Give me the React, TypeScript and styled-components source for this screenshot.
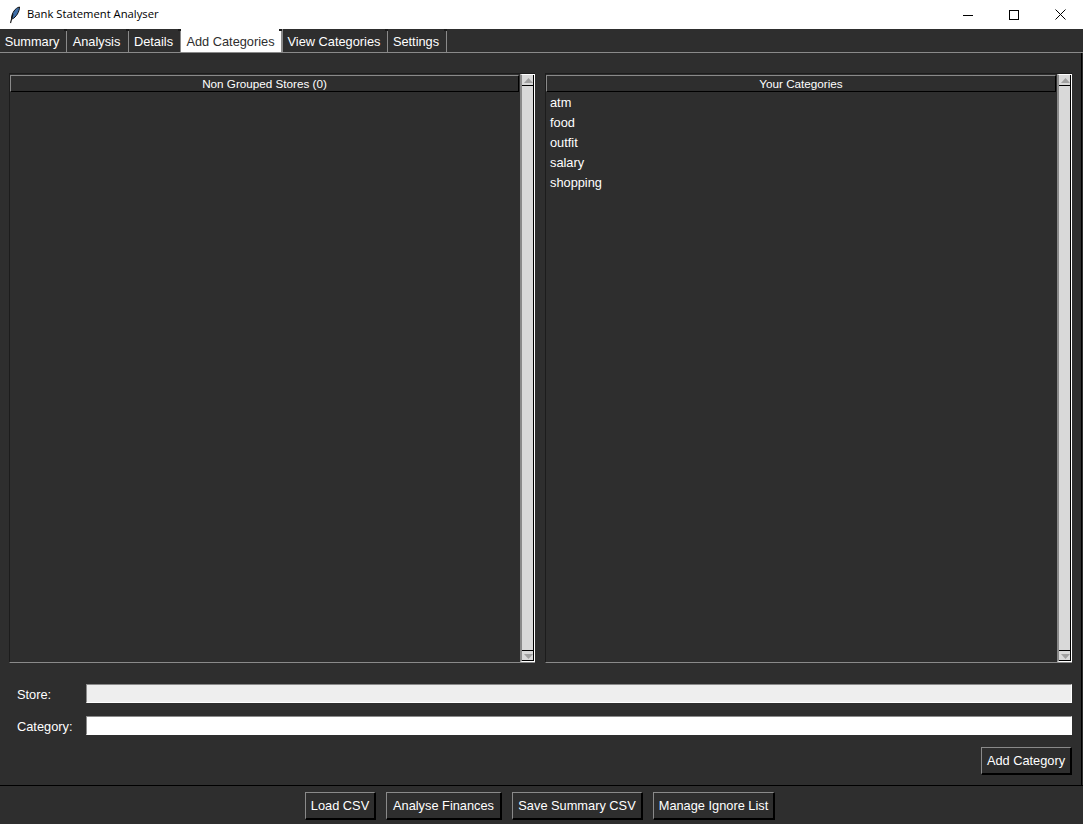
import React from "react";
import styled, { createGlobalStyle } from "styled-components";

const Global = createGlobalStyle`
  html, body { margin: 0; padding: 0; background: #2e2e2e; overflow: hidden; }
  * { box-sizing: border-box; }
`;
const Win = styled.div`
  width: 1083px; height: 824px; display: flex; flex-direction: column;
  background: #2e2e2e; color: #fff;
  font-family: "Liberation Sans", Arial, sans-serif; font-size: 12.8px;
`;
const TitleBar = styled.div`
  height: 29px; background: #fff; color: #000; display: flex; align-items: center;
  padding-left: 8px; font-family: "Open Sans", sans-serif; font-size: 11.25px; flex: none;
`;
const TitleText = styled.span`margin-left: 5px; flex: 1; margin-top: -2px;`;
const WinBtn = styled.div`
  width: 46px; height: 29px; display: flex; align-items: center; justify-content: center;
`;
const TabStrip = styled.div`
  height: 24px; display: flex; flex: none; border-bottom: 1px solid #8a8a8a;
`;
const Tab = styled.div<{ $active?: boolean; $w: number }>`
  position: relative;
  width: ${p => p.$w}px; height: 23px; line-height: 25px; text-align: center; white-space: nowrap;
  padding-right: ${p => (p.$active ? 1 : 2)}px;
  background: ${p => (p.$active ? "#fff" : "#2e2e2e")};
  color: ${p => (p.$active ? "#2e2e2e" : "#fff")};
  border-right: ${p => (p.$active ? 2 : 1)}px solid #8a8a8a;
  &::after {
    content: ""; position: absolute; top: 0; right: -1px; width: 3px; height: 2px; background: #1c1c1c;
  }
`;
const Body = styled.div`
  flex: 1; display: flex; flex-direction: column; padding: 20px 9px 0 9px; border-right: 1px solid #000; min-height: 0; margin-right: 1px;
`;
const Panes = styled.div`display: flex; gap: 10px; height: 590px; flex: none;`;
const Pane = styled.div<{ $w: number }>`
  width: ${p => p.$w}px; display: flex; border-bottom: 1px solid #8a8a8a; border-left: 1px solid #1c1c1c; border-top: 1px solid #1c1c1c; padding-top: 1px;
`;
const ListArea = styled.div`flex: 1; display: flex; flex-direction: column; min-width: 0;`;
const Head = styled.div`
  height: 17px; flex: none; font-size: 11.7px; line-height: 16px; text-align: center; margin-right: 1px;
  border-top: 1px solid #8a8a8a; border-left: 1px solid #8a8a8a;
  border-bottom: 1px solid #000; border-right: 1px solid #000;
`;
const List = styled.div`padding: 1px 0 0 4px; display: flex; flex-direction: column;`;
const Item = styled.div`height: 20px; line-height: 19px;`;
const Scroll = styled.div`
  width: 15px; margin-top: -1px; display: flex; flex-direction: column; background: #d9d9d9;
  border-left: 2px solid #8a8a8a; border-right: 1px solid #fff;
  border-top: 1px solid #fff; border-bottom: 1px solid #fff;
  box-shadow: inset -1px -1px 0 #000;
`;
const ScrollBtn = styled.div<{ $down?: boolean }>`
  height: 11px; flex: none; display: flex; align-items: center; justify-content: center;
  ${p => (p.$down ? "border-top: 1px solid #000;" : "border-bottom: 1px solid #000;")}
`;
const Track = styled.div`flex: 1;`;
const Form = styled.div`padding-top: 21px; display: flex; flex-direction: column;`;
const Row = styled.div`
  display: flex; align-items: flex-start; margin-bottom: 12px; height: 20px;
`;
const Label = styled.div`width: 77px; padding-left: 8px; flex: none; line-height: 22px;`;
const Entry = styled.div<{ $bg: string }>`
  flex: 1; height: 19px; background: ${p => p.$bg};
  border-top: 1px solid #8a8a8a; border-left: 1px solid #8a8a8a;
  border-bottom: 1px solid #fff; border-right: 1px solid #fff;
`;
const Btn = styled.button<{ $w: number }>`
  width: ${p => p.$w}px; height: 28px; padding: 0; background: #2e2e2e; color: #fff;
  font: inherit; text-align: center; white-space: nowrap;
  border-style: solid; border-width: 1px 2px 2px 1px;
  border-color: #8a8a8a #000 #000 #8a8a8a;
`;
const AddRow = styled.div`display: flex; justify-content: flex-end; margin-top: -1px;`;
const Footer = styled.div`
  height: 39px; flex: none; border-top: 1px solid #000; display: flex; justify-content: center;
  gap: 10px; padding: 6px 3px 0 0;
`;
const Spacer = styled.div`height: 10px; flex: none;`;

const Arrow = ({ down }: { down?: boolean }) => (
  <svg width="9" height="5" viewBox="0 0 9 5"><path d={down ? "M0 0h9L4.5 5z" : "M0 5h9L4.5 0z"} fill="#a0a0a0" /></svg>
);
const ScrollBar = () => (
  <Scroll>
    <ScrollBtn><Arrow /></ScrollBtn>
    <Track />
    <ScrollBtn $down><Arrow down /></ScrollBtn>
  </Scroll>
);

const tabs: [string, number][] = [["Summary", 67], ["Analysis", 62], ["Details", 52], ["Add Categories", 102], ["View Categories", 105], ["Settings", 59]];

export default function App() {
  return (
    <Win>
      <Global />
      <TitleBar>
        <svg width="14" height="18" viewBox="0 0 14 18">
          <path d="M11.5 1C7 2 4 7 3.5 12L4.5 13C8 11 11.5 6 11.5 1z" fill="#3f6fa8" stroke="#111" strokeWidth="1" />
          <path d="M5 8L2.5 17" stroke="#111" strokeWidth="1.1" fill="none" />
        </svg>
        <TitleText>Bank Statement Analyser</TitleText>
        <WinBtn><svg width="10" height="10"><path d="M0 5.5h10" stroke="#000" /></svg></WinBtn>
        <WinBtn><svg width="10" height="10"><rect x=".5" y=".5" width="9" height="9" fill="none" stroke="#000" /></svg></WinBtn>
        <WinBtn><svg width="11" height="11"><path d="M.5.5l10 10M10.5.5l-10 10" stroke="#000" /></svg></WinBtn>
      </TitleBar>
      <TabStrip>
        {tabs.map(([t, w]) => <Tab key={t} $w={w} $active={t === "Add Categories"}>{t}</Tab>)}
      </TabStrip>
      <Body>
        <Panes>
          <Pane $w={526}>
            <ListArea><Head>Non Grouped Stores (0)</Head></ListArea>
            <ScrollBar />
          </Pane>
          <Pane $w={527}>
            <ListArea>
              <Head>Your Categories</Head>
              <List>
                {["atm", "food", "outfit", "salary", "shopping"].map(c => <Item key={c}>{c}</Item>)}
              </List>
            </ListArea>
            <ScrollBar />
          </Pane>
        </Panes>
        <Form>
          <Row><Label>Store:</Label><Entry $bg="#eeeeee" /></Row>
          <Row><Label>Category:</Label><Entry $bg="#ffffff" /></Row>
          <AddRow><Btn $w={91}>Add Category</Btn></AddRow>
        </Form>
        <Spacer />
      </Body>
      <Footer>
        <Btn $w={71}>Load CSV</Btn>
        <Btn $w={116}>Analyse Finances</Btn>
        <Btn $w={131}>Save Summary CSV</Btn>
        <Btn $w={122}>Manage Ignore List</Btn>
      </Footer>
    </Win>
  );
}
